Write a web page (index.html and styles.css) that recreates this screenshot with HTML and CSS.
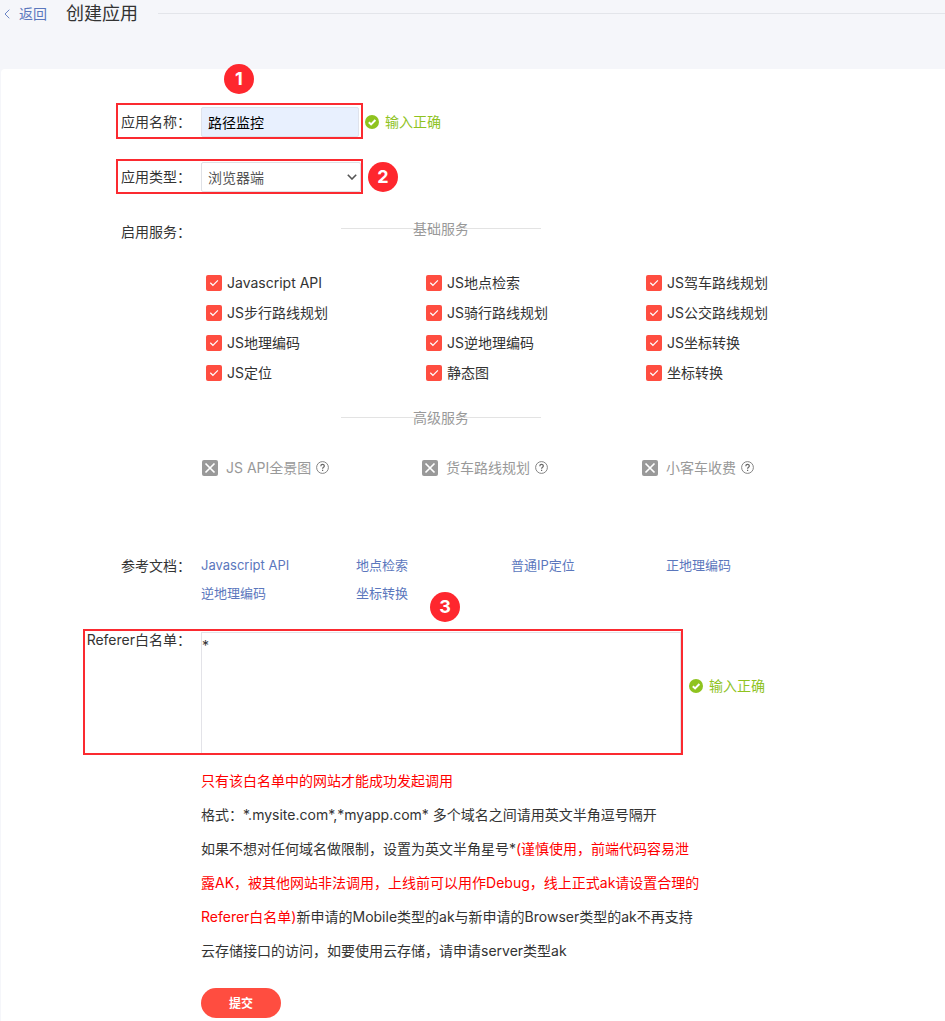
FILE: index.html
```
<!DOCTYPE html>
<html lang="zh-CN">
<head>
    <meta charset="UTF-8">
    <meta name="viewport" content="width=device-width, initial-scale=1.0">
    <title>创建应用</title>
    <link rel="stylesheet" href="styles.css">
</head>
<body>
    <!-- shared icons -->
    <svg class="sprite" aria-hidden="true">
        <symbol id="ok" viewBox="0 0 14 14">
            <circle cx="7" cy="7" r="7" fill="#8fc31f"/>
            <path d="M3.8 7.2l2.3 2.2 4.3-4.4" fill="none" stroke="#fff" stroke-width="2"/>
        </symbol>
        <symbol id="help" viewBox="0 0 13 13">
            <circle cx="6.5" cy="6.5" r="5.9" fill="none" stroke="#777" stroke-width="0.9"/>
            <path d="M4.8 5.2c0-2.4 3.5-2.3 3.5-.2 0 1.3-1.7 1.3-1.7 2.7M6.6 8.7v1.2" fill="none" stroke="#666" stroke-width="1.2"/>
        </symbol>
    </svg>

    <header class="header">
        <a class="back" href="#">
            <svg width="6" height="10" viewBox="0 0 6 10"><path d="M5.3.7L1 5l4.3 4.3" fill="none" stroke="#6a84c6"/></svg>
            返回
        </a>
        <h1>创建应用</h1>
        <div class="header-line"></div>
    </header>

    <form class="panel">
        <div class="row">
            <label class="label" for="app-name">应用名称：</label>
            <input class="text-input" type="text" id="app-name" value="路径监控">
            <span class="status"><svg width="14" height="14"><use href="#ok"/></svg>输入正确</span>
            <div class="mark mark-name"></div>
            <span class="badge badge-1">1</span>
        </div>

        <div class="row">
            <label class="label" for="app-type">应用类型：</label>
            <div class="select-box">
                <select id="app-type">
                    <option>浏览器端</option>
                </select>
                <svg class="arrow" width="10" height="6" viewBox="0 0 10 6"><path d="M.8.8L5 5 9.200.8" fill="none" stroke="#555" stroke-width="1.6"/></svg>
            </div>
            <div class="mark mark-type"></div>
            <span class="badge badge-2">2</span>
        </div>

        <div class="row services-row">
            <span class="label">启用服务：</span>
            <div class="services">
                <h2 class="divider"><span>基础服务</span></h2>
                <div class="service-list">
                    <label><input type="checkbox" checked>Javascript API</label>
                    <label><input type="checkbox" checked>JS地点检索</label>
                    <label><input type="checkbox" checked>JS驾车路线规划</label>
                    <label><input type="checkbox" checked>JS步行路线规划</label>
                    <label><input type="checkbox" checked>JS骑行路线规划</label>
                    <label><input type="checkbox" checked>JS公交路线规划</label>
                    <label><input type="checkbox" checked>JS地理编码</label>
                    <label><input type="checkbox" checked>JS逆地理编码</label>
                    <label><input type="checkbox" checked>JS坐标转换</label>
                    <label><input type="checkbox" checked>JS定位</label>
                    <label><input type="checkbox" checked>静态图</label>
                    <label><input type="checkbox" checked>坐标转换</label>
                </div>
                <h2 class="divider"><span>高级服务</span></h2>
                <div class="service-list advanced">
                    <label><input type="checkbox" disabled>JS API全景图<svg width="13" height="13"><use href="#help"/></svg></label>
                    <label><input type="checkbox" disabled>货车路线规划<svg width="13" height="13"><use href="#help"/></svg></label>
                    <label><input type="checkbox" disabled>小客车收费<svg width="13" height="13"><use href="#help"/></svg></label>
                </div>
            </div>
        </div>

        <div class="row docs-row">
            <span class="label">参考文档：</span>
            <div class="docs">
                <a href="#">Javascript API</a>
                <a href="#">地点检索</a>
                <a href="#">普通IP定位</a>
                <a href="#">正地理编码</a>
                <a href="#">逆地理编码</a>
                <a href="#">坐标转换</a>
            </div>
        </div>

        <div class="row referer-row">
            <label class="label" for="referer">Referer白名单：</label>
            <textarea id="referer">*</textarea>
            <span class="status"><svg width="14" height="14"><use href="#ok"/></svg>输入正确</span>
            <div class="mark mark-referer"></div>
            <span class="badge badge-3">3</span>
        </div>

        <div class="tips">
            <p class="red">只有该白名单中的网站才能成功发起调用</p>
            <p>格式：*.mysite.com*,*myapp.com* 多个域名之间请用英文半角逗号隔开</p>
            <p>如果不想对任何域名做限制，设置为英文半角星号*<span class="red">(谨慎使用，前端代码容易泄露AK，被其他网站非法调用，上线前可以用作Debug，线上正式ak请设置合理的Referer白名单)</span>新申请的Mobile类型的ak与新申请的Browser类型的ak不再支持云存储接口的访问，如要使用云存储，请申请server类型ak</p>
        </div>

        <button class="submit" type="submit">提交</button>
    </form>
</body>
</html>
```
FILE: styles.css
```
* {
    box-sizing: border-box;
}

body {
    margin: 0;
    background: #f5f6fa;
    color: #333;
    font-family: Inter, "Noto Sans CJK SC", sans-serif;
    font-size: 14px;
    line-height: 30px;
}

a {
    color: #5b77bd;
    text-decoration: none;
}

input,
select,
textarea,
button {
    margin: 0;
    font-family: inherit;
    font-size: 14px;
}

.sprite {
    display: none;
}

.header {
    display: flex;
    align-items: center;
    height: 27px;
    margin-bottom: 42px;
    padding-left: 4px;
}

.back {
    display: flex;
    align-items: center;
    gap: 9px;
}

.header h1 {
    margin: 0 20px 0 19px;
    font-size: 18px;
    font-weight: normal;
}

.header-line {
    flex: 1;
    height: 1px;
    background: #e3e5ea;
}

.panel {
    margin-left: 1px;
    padding: 38px 0 3px;
    border-radius: 4px 0 0 0;
    background: #fff;
}

.row {
    position: relative;
    display: flex;
    margin-bottom: 25px;
}

.label {
    flex: none;
    width: 200px;
    padding-right: 10px;
    text-align: right;
}

.text-input {
    width: 158px;
    height: 30px;
    padding: 0 6px;
    border: 1px solid #dfe3ec;
    border-radius: 2px;
    background: #e8f0fe;
    color: #000;
}

.status {
    display: flex;
    align-items: center;
    gap: 6px;
    margin-left: 6px;
    color: #8fc31f;
}

.select-box {
    position: relative;
    width: 160px;
}

.select-box select {
    width: 100%;
    height: 30px;
    padding: 0 6px;
    border: 1px solid #dfe1e6;
    border-radius: 2px;
    background: #fff;
    color: #555;
    appearance: none;
}

.arrow {
    position: absolute;
    top: 12px;
    right: 4px;
}

/* red frames and numbers over the fields */
.mark {
    position: absolute;
    border: 2px solid #fb2a30;
    pointer-events: none;
}

.mark-name {
    top: -4px;
    left: 115px;
    width: 247px;
    height: 36px;
}

.mark-type {
    top: -3px;
    left: 115px;
    width: 247px;
    height: 35px;
}

.mark-referer {
    top: -3px;
    left: 82px;
    width: 600px;
    height: 126px;
}

.badge {
    position: absolute;
    width: 30px;
    height: 30px;
    border-radius: 50%;
    background: #fe272e;
    color: #fff;
    font-size: 18px;
    font-weight: bold;
    text-align: center;
}

.badge-1 {
    top: -43px;
    left: 223px;
}

.badge-2 {
    top: 0;
    left: 367px;
}

.badge-3 {
    top: -40px;
    left: 429px;
}

.services-row .label {
    line-height: 28px;
}

.services {
    flex: none;
    width: 660px;
}

.divider {
    display: flex;
    align-items: center;
    width: 200px;
    height: 22px;
    margin: 0 0 0 140px;
    color: #999;
    font-size: 14px;
    font-weight: normal;
}

.divider::before,
.divider::after {
    content: "";
    flex: 1;
    height: 1px;
    background: #e3e3e3;
}

.divider span {
    margin: 0 -4px;
}

.service-list {
    display: grid;
    grid-template-columns: repeat(3, 220px);
    padding: 28px 0 19px 5px;
}

.service-list label {
    display: flex;
    align-items: center;
    gap: 5px;
}

.service-list input {
    flex: none;
    width: 16px;
    height: 16px;
    border-radius: 2px;
    background: #ff4d40 url("data:image/svg+xml,%3Csvg xmlns='http://www.w3.org/2000/svg' viewBox='0 0 16 16'%3E%3Cpath d='M4.300 7.800l2.600 2.500 5-5' fill='none' stroke='%23fff' stroke-width='1.2'/%3E%3C/svg%3E");
    appearance: none;
}

.advanced {
    padding: 24px 0 0 1px;
    color: #999;
}

.advanced input {
    margin-right: 3px;
    background: #999 url("data:image/svg+xml,%3Csvg xmlns='http://www.w3.org/2000/svg' viewBox='0 0 16 16'%3E%3Cpath d='M3.500 3.500l9 9M12.500 3.500l-9 9' stroke='%23fff' stroke-width='1.7'/%3E%3C/svg%3E");
}

.docs-row {
    margin-top: 68px;
}

.docs {
    display: grid;
    grid-template-columns: repeat(4, 155px);
    font-size: 13px;
    line-height: 28px;
}

.referer-row {
    margin-bottom: 10px;
}

.referer-row .label {
    line-height: 16px;
}

.referer-row textarea {
    width: 480px;
    height: 122px;
    padding: 4px 0;
    border: 1px solid #e3e3e8;
    color: #333;
    line-height: 18px;
    resize: none;
}

.referer-row .status {
    margin-left: 8px;
    padding-bottom: 14px;
}

.tips {
    width: 500px;
    margin-left: 200px;
    line-height: 34px;
}

.tips p {
    margin: 0;
}

.red {
    color: #f00;
}

.submit {
    display: block;
    width: 80px;
    height: 30px;
    margin: 20px 0 0 200px;
    border: 0;
    border-radius: 15px;
    background: #ff4d40;
    color: #fff;
    font-size: 12px;
    font-weight: bold;
}
```
